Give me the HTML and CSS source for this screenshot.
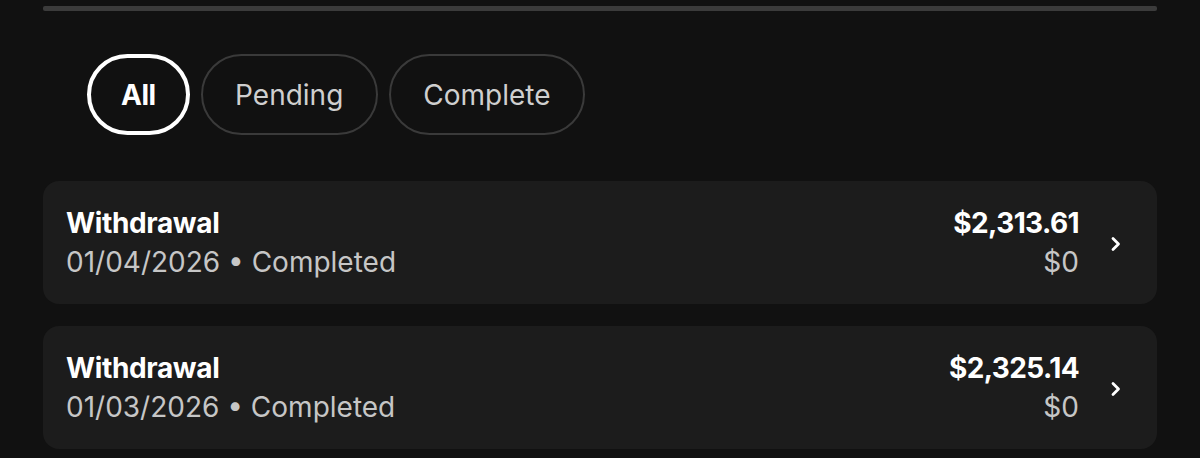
FILE: index.html
```html
<!DOCTYPE html>
<html lang="en">
<head>
<meta charset="utf-8">
<title>Transactions</title>
<link rel="stylesheet" href="styles.css">
</head>
<body>
<div class="page">
  <div class="progress"></div>
  <div class="filters">
    <button class="pill active">All</button>
    <button class="pill">Pending</button>
    <button class="pill">Complete</button>
  </div>
  <div class="list">
    <div class="card">
      <div class="info">
        <div class="title">Withdrawal</div>
        <div class="sub">01/04/2026 • Completed</div>
      </div>
      <div class="amounts">
        <div class="amount">$2,313.61</div>
        <div class="sub">$0</div>
      </div>
      <svg class="chev" width="12" height="16" viewBox="0 0 12 16"><path d="M3 2.5 L8.5 8 L3 13.5" fill="none" stroke="#fff" stroke-width="2.8" stroke-linecap="round" stroke-linejoin="round"/></svg>
    </div>
    <div class="card">
      <div class="info">
        <div class="title">Withdrawal</div>
        <div class="sub">01/03/2026 • Completed</div>
      </div>
      <div class="amounts">
        <div class="amount">$2,325.14</div>
        <div class="sub">$0</div>
      </div>
      <svg class="chev" width="12" height="16" viewBox="0 0 12 16"><path d="M3 2.5 L8.5 8 L3 13.5" fill="none" stroke="#fff" stroke-width="2.8" stroke-linecap="round" stroke-linejoin="round"/></svg>
    </div>
  </div>
</div>
</body>
</html>
```
FILE: styles.css
```css
* { box-sizing: border-box; }
html, body { margin: 0; padding: 0; background: #111111; }
body {
  font-family: Inter, "Noto Sans", "Liberation Sans", sans-serif;
  color: #fff;
  height: 458px;
  overflow: hidden;
}
.page { padding: 6px 43px 0; }
.progress {
  height: 5px;
  background: #3b3b3b;
  border-radius: 2px;
}
.filters {
  display: flex;
  gap: 11px;
  margin-top: 43px;
  padding-left: 44px;
}
.pill {
  height: 81px;
  padding: 0 32.5px;
  border: 2px solid #3a3a3a;
  border-radius: 41px;
  background: transparent;
  color: #cfcfcf;
  font-family: inherit;
  font-size: 28px;
  font-weight: 400;
  display: flex;
  align-items: center;
}
.pill.active {
  border: 4px solid #fff;
  color: #fff;
  font-weight: 700;
  padding: 0 30px;
  letter-spacing: -0.5px;
}
.list {
  display: flex;
  flex-direction: column;
  gap: 22px;
  margin-top: 46px;
}
.card {
  height: 123px;
  background: #1c1c1c;
  border-radius: 16px;
  display: flex;
  align-items: center;
  padding: 0 35px 0 23px;
}
.info { flex: 1; }
.title, .amount {
  font-size: 28px;
  font-weight: 700;
  line-height: 39px;
  letter-spacing: -0.35px;
  color: #fff;
}
.amount { letter-spacing: -0.6px; }
.sub {
  font-size: 28px;
  line-height: 39px;
  color: #c6c6c6;
}
.amounts { text-align: right; }
.chev { margin-left: 31px; margin-top: 2px; }
```
